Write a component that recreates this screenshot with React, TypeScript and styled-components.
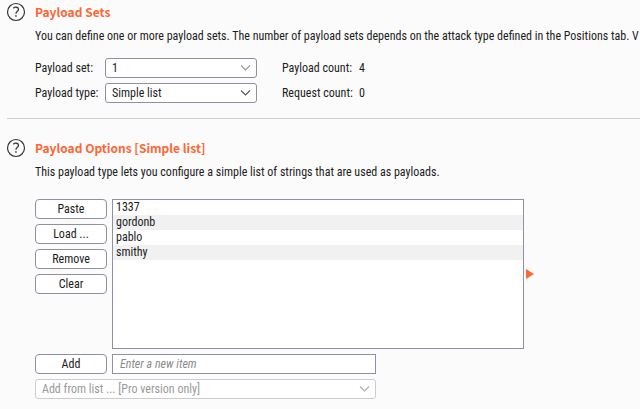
import React, { useState } from "react";
import styled, { createGlobalStyle } from "styled-components";

const GlobalStyle = createGlobalStyle`
  * { box-sizing: border-box; }
  body {
    margin: 0;
    background: #fbfbfb;
    color: #1c1c1c;
    font: 12px/20px "Roboto Condensed", "Noto Sans CJK SC", sans-serif;
  }
  button, input, select { font: inherit; color: inherit; }
`;

const Page = styled.main`
  padding: 2px 0 10px 7px;
`;

const Section = styled.section`
  display: grid;
  grid-template-columns: 18px minmax(0, 1fr);
  column-gap: 10px;
`;

const Divider = styled.hr`
  height: 1px;
  margin: 15px 0 19px;
  border: 0;
  background: #cecece;
`;

const HelpButton = styled.button`
  width: 20px;
  height: 20px;
  margin-left: -1px;
  padding: 0;
  border: 0;
  background: none;
  svg { display: block; }
`;

const Title = styled.h2`
  margin: 0;
  color: #ff6633;
  font: 700 12px/20px "Noto Sans CJK SC", "Noto Sans", sans-serif;
`;

const Description = styled.p`
  margin: 4px 0 0;
  line-height: 20px;
  white-space: nowrap;
  overflow: hidden;
`;

const SetGrid = styled.div`
  display: grid;
  grid-template-columns: 70px 152px 102px 1fr;
  row-gap: 5px;
  margin-top: 12px;
`;

const Label = styled.label`
  white-space: nowrap;
`;

const CountLabel = styled(Label)`
  padding-left: 25px;
`;

const Count = styled.output`
  display: block;
`;

const SelectBox = styled.div<{ $muted?: boolean }>`
  display: grid;
  grid-template-columns: minmax(0, 1fr) 16px;
  align-items: center;
  height: 20px;
  border: 1px solid ${(p) => (p.$muted ? "#cdcdcd" : "#9090a4")};
  border-radius: 3px;
  background: #fff;
  color: ${(p) => (p.$muted ? "#999" : "#1c1c1c")};
  select, svg { grid-row: 1; }
  svg { grid-column: 2; pointer-events: none; z-index: 1; }
`;

const Select = styled.select`
  grid-column: 1 / -1;
  width: 100%;
  height: 18px;
  padding: 0 16px 0 6px;
  border: 0;
  background: transparent;
  line-height: 18px;
  appearance: none;
  opacity: 1;
`;

const Editor = styled.div`
  display: grid;
  grid-template-columns: 77px minmax(0, 412px) 10px;
  margin-top: 17px;
`;

const Actions = styled.div`
  display: flex;
  flex-direction: column;
  gap: 5px;
`;

const Button = styled.button`
  width: 72px;
  height: 20px;
  padding: 0;
  border: 1px solid #9090a4;
  border-radius: 4px;
  background: #fff;
  line-height: 18px;
`;

const List = styled.ul`
  height: 150px;
  margin: 0;
  padding: 0;
  border: 1px solid #9090a4;
  background: #fff;
  list-style: none;
  overflow: auto;
`;

const Item = styled.li`
  height: 15px;
  padding-left: 3px;
  line-height: 15px;
  &:nth-child(even) { background: #f1f1f1; }
`;

const Arrow = styled.svg`
  display: block;
  place-self: center end;
`;

const AddForm = styled.form`
  display: grid;
  grid-template-columns: 72px minmax(0, 264px);
  gap: 5px;
  margin-top: 5px;
`;

const NewItem = styled.input`
  width: 100%;
  height: 20px;
  padding: 0 7px;
  border: 1px solid #9090a4;
  border-radius: 0;
  background: #fff;
  &::placeholder { color: #8c8c8c; font-style: italic; opacity: 1; }
`;

const FullRow = styled.div`
  grid-column: 1 / -1;
`;

function Help({ label }: { label: string }) {
  return (
    <HelpButton type="button" aria-label={label}>
      <svg width="20" height="20" viewBox="0 0 20 20" fill="none" stroke="#333">
        <circle cx="10" cy="10" r="8.5" strokeWidth="1.2" />
        <path d="M7.3 6.2c.8-.7 1.600-1 2.600-1 1.600 0 2.600.9 2.600 2.200 0 1.800-2.600 2-2.600 4.300" strokeWidth="1.2" />
        <path d="M9.200 14h1.500" strokeWidth="1.500" />
      </svg>
    </HelpButton>
  );
}

interface DropdownProps {
  id: string;
  label?: string;
  options: string[];
  disabled?: boolean;
  chevron: string;
}

function Dropdown({ id, label, options, disabled, chevron }: DropdownProps) {
  return (
    <SelectBox $muted={disabled}>
      <Select id={id} aria-label={label} disabled={disabled}>
        {options.map((o) => <option key={o}>{o}</option>)}
      </Select>
      <svg width="11" height="8" viewBox="0 0 11 8" fill="none" stroke={chevron}>
        <path d="M1 1.500 5.500 6 10 1.500" strokeWidth="1.100" />
      </svg>
    </SelectBox>
  );
}

export default function App() {
  const [items, setItems] = useState(["1337", "gordonb", "pablo", "smithy"]);
  const [draft, setDraft] = useState("");
  const add = (e: React.FormEvent) => {
    e.preventDefault();
    if (draft) setItems([...items, draft]);
    setDraft("");
  };
  return (
    <>
      <GlobalStyle />
      <Page>
        <Section>
          <Help label="Help for payload sets" />
          <div>
            <Title>Payload Sets</Title>
            <Description>
              You can define one or more payload sets. The number of payload sets depends on the attack type defined in the Positions tab. V
            </Description>
            <SetGrid>
              <Label htmlFor="set">Payload set:</Label>
              <Dropdown id="set" options={["1"]} chevron="#999" />
              <CountLabel htmlFor="pcount">Payload count:</CountLabel>
              <Count id="pcount">{items.length}</Count>
              <Label htmlFor="type">Payload type:</Label>
              <Dropdown id="type" options={["Simple list"]} chevron="#555" />
              <CountLabel htmlFor="rcount">Request count:</CountLabel>
              <Count id="rcount">0</Count>
            </SetGrid>
          </div>
        </Section>
        <Divider />
        <Section>
          <Help label="Help for payload options" />
          <div>
            <Title>Payload Options [Simple list]</Title>
            <Description>
              This payload type lets you configure a simple list of strings that are used as payloads.
            </Description>
            <Editor>
              <Actions>
                <Button type="button">Paste</Button>
                <Button type="button">Load ...</Button>
                <Button type="button">Remove</Button>
                <Button type="button" onClick={() => setItems([])}>Clear</Button>
              </Actions>
              <List aria-label="Payloads">
                {items.map((t, i) => <Item key={i}>{t}</Item>)}
              </List>
              <Arrow width="8" height="10" viewBox="0 0 8 10">
                <path d="M0 0 8 5 0 10Z" fill="#ff6633" />
              </Arrow>
            </Editor>
            <AddForm onSubmit={add}>
              <Button type="submit">Add</Button>
              <NewItem
                aria-label="New item"
                placeholder="Enter a new item"
                value={draft}
                onChange={(e) => setDraft(e.target.value)}
              />
              <FullRow>
                <Dropdown
                  id="preset"
                  label="Add from list"
                  options={["Add from list ... [Pro version only]"]}
                  disabled
                  chevron="#aaa"
                />
              </FullRow>
            </AddForm>
          </div>
        </Section>
      </Page>
    </>
  );
}
